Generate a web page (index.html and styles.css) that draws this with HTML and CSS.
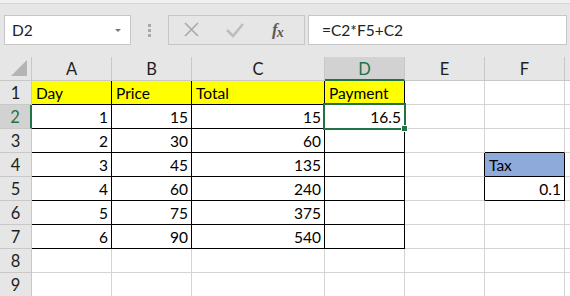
FILE: index.html
```html
<!DOCTYPE html>
<html lang="en">
<head>
  <meta charset="UTF-8" />
  <title>Book1 - Excel</title>
  <link rel="stylesheet" href="styles.css">
</head>
<body>
  <div class="ribbon-edge"></div>

  <div class="formula-bar">
    <div class="name-box">
      <span>D2</span>
      <span class="drop"></span>
    </div>
    <div class="grip"><i></i><i></i><i></i></div>
    <div class="fx-buttons">
      <svg class="ico" width="18" height="18" viewBox="0 0 18 18">
        <path d="M2 2 L15 15 M15 2 L2 15" stroke="#a9a9a9" stroke-width="1.6" fill="none" />
      </svg>
      <svg class="ico" width="20" height="18" viewBox="0 0 20 18">
        <path d="M2 9 L8 15 L18 3" stroke="#bdbdbd" stroke-width="2.6" fill="none" />
      </svg>
      <span class="fx">f<sub>x</sub></span>
    </div>
    <div class="formula-input">=C2*F5+C2</div>
  </div>

  <div class="sheet">
    <div class="hd corner"><span class="tri"></span></div>
    <div class="hd">A</div>
    <div class="hd">B</div>
    <div class="hd">C</div>
    <div class="hd active-col">D</div>
    <div class="hd">E</div>
    <div class="hd">F</div>
    <div class="hd"></div>

    <div class="rh">1</div>
    <div class="c yellow bb br">Day</div>
    <div class="c yellow bb br">Price</div>
    <div class="c yellow bb br">Total</div>
    <div class="c yellow bb br">Payment</div>
    <div class="c"></div>
    <div class="c"></div>
    <div class="c"></div>

    <div class="rh active-row">2</div>
    <div class="c n bb br">1</div>
    <div class="c n bb br">15</div>
    <div class="c n bb br">15</div>
    <div class="c n bb br sel">16.5<span class="sel-box"><span class="handle"></span></span></div>
    <div class="c"></div>
    <div class="c"></div>
    <div class="c"></div>

    <div class="rh">3</div>
    <div class="c n bb br">2</div>
    <div class="c n bb br">30</div>
    <div class="c n bb br">60</div>
    <div class="c bb br"></div>
    <div class="c"></div>
    <div class="c bb"></div>
    <div class="c"></div>

    <div class="rh">4</div>
    <div class="c n bb br">3</div>
    <div class="c n bb br">45</div>
    <div class="c n bb br">135</div>
    <div class="c bb br"></div>
    <div class="c br"></div>
    <div class="c blue bb br">Tax</div>
    <div class="c"></div>

    <div class="rh">5</div>
    <div class="c n bb br">4</div>
    <div class="c n bb br">60</div>
    <div class="c n bb br">240</div>
    <div class="c bb br"></div>
    <div class="c br"></div>
    <div class="c n bb br">0.1</div>
    <div class="c"></div>

    <div class="rh">6</div>
    <div class="c n bb br">5</div>
    <div class="c n bb br">75</div>
    <div class="c n bb br">375</div>
    <div class="c bb br"></div>
    <div class="c"></div>
    <div class="c"></div>
    <div class="c"></div>

    <div class="rh">7</div>
    <div class="c n bb br">6</div>
    <div class="c n bb br">90</div>
    <div class="c n bb br">540</div>
    <div class="c bb br"></div>
    <div class="c"></div>
    <div class="c"></div>
    <div class="c"></div>

    <div class="rh">8</div>
    <div class="c"></div><div class="c"></div><div class="c"></div><div class="c"></div>
    <div class="c"></div><div class="c"></div><div class="c"></div>

    <div class="rh">9</div>
    <div class="c"></div><div class="c"></div><div class="c"></div><div class="c"></div>
    <div class="c"></div><div class="c"></div><div class="c"></div>
  </div>
</body>
</html>
```

FILE: styles.css
```css
body {
  margin: 0;
  background: #e6e6e6;
  font-family: Lato, "Liberation Sans", sans-serif;
  font-size: 15.5px;
  color: #000;
  width: 570px;
  height: 296px;
  overflow: hidden;
}
.ribbon-edge {
  height: 3px;
  background: #f1f1f1;
  border-bottom: 1px solid #d4d4d4;
}

/* formula bar */
.formula-bar {
  display: flex;
  align-items: center;
  height: 30px;
  margin-top: 11px;
  padding-left: 4px;
}
.name-box {
  display: flex; align-items: center; justify-content: space-between;
  padding: 0 9px 0 7px;
  box-sizing: border-box;
  width: 127px; height: 30px;
  background: #fff;
  border: 1px solid #c6c6c6;
  color: #222;
}
.drop {
  width: 0; height: 0;
  border-left: 3px solid transparent;
  border-right: 3px solid transparent;
  border-top: 3px solid #777;
}
.grip {
  display: flex; flex-direction: column; gap: 2px;
  margin: 0 17px;
}
.grip i { display: block; width: 3px; height: 3px; background: #a8a8a8; }
.fx-buttons {
  display: flex; align-items: center;
  width: 137px; height: 30px;
  box-sizing: border-box;
  border: 1px solid #c6c6c6;
  padding-left: 14px;
  gap: 24px;
}
.fx-buttons .ico { display: block; }
.fx {
  font-family: "Liberation Serif", serif;
  font-style: italic;
  font-weight: bold;
  font-size: 17px;
  color: #5a5a5a;
  margin-left: 3px;
}
.fx sub { font-size: 14px; vertical-align: -2px; margin-left: -1px; }
.formula-input {
  flex: 1;
  height: 30px;
  margin: 0 3px;
  box-sizing: border-box;
  background: #fff;
  border: 1px solid #c6c6c6;
  display: flex; align-items: center;
  padding-left: 13px;
  color: #222;
}

/* sheet grid */
.sheet {
  display: grid;
  grid-template-columns: 32px 80px 80px 133px 80px 80px 80px 10px;
  grid-template-rows: repeat(10, 24px);
  margin-top: 12px;
  background: #fff;
}
.hd, .rh {
  background: #e6e6e6;
  border-right: 1px solid #c8c8c8;
  border-bottom: 1px solid #c8c8c8;
  display: flex; align-items: center; justify-content: center;
  color: #1e1e1e;
  box-sizing: border-box;
  font-size: 16.5px;
}
.hd { padding-top: 1px; }
.corner { position: relative; }
.tri {
  position: absolute; right: 4px; bottom: 4px;
  width: 0; height: 0;
  border-left: 16px solid transparent;
  border-bottom: 16px solid #b4b4b4;
}
.active-col {
  background: #d2d2d2;
  color: #217346;
  border-bottom: 2px solid #217346;
}
.active-row {
  background: #d2d2d2;
  color: #217346;
  border-right: 2px solid #217346;
}
.c {
  box-sizing: border-box;
  border-right: 1px solid #d4d4d4;
  border-bottom: 1px solid #d4d4d4;
  display: flex; align-items: flex-end;
  padding: 0 3px 2px 4px;
  white-space: nowrap;
}
.n { justify-content: flex-end; }
.bb { border-bottom-color: #000; }
.br { border-right-color: #000; }
.yellow { background: #ffff00; }
.blue { background: #8eaadb; }

/* selected cell */
.sel { position: relative; }
.sel-box {
  position: absolute;
  top: -2px; left: -2px; right: -2px; bottom: -2px;
  border: 2px solid #217346;
}
.handle {
  position: absolute;
  right: -4px; bottom: -4px;
  width: 5px; height: 5px;
  background: #217346;
  border: 1px solid #fff;
}
```
